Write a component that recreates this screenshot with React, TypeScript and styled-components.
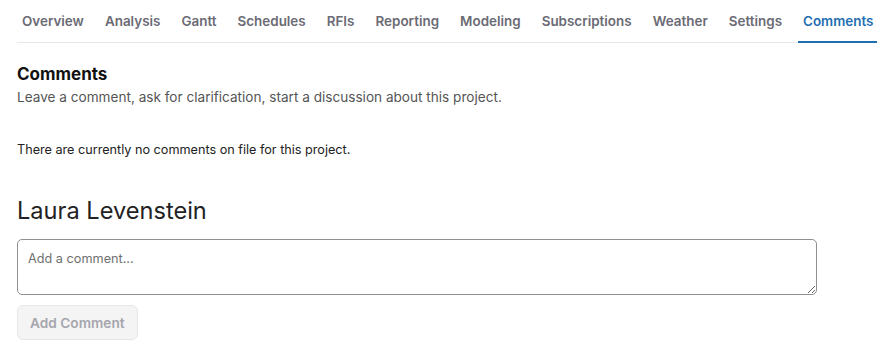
import React, { useState } from 'react';
import styled, { createGlobalStyle } from 'styled-components';

const GlobalStyle = createGlobalStyle`
  body {
    margin: 0;
    background: #ffffff;
    font-family: Inter, "Noto Sans", Arial, sans-serif;
  }
`;

const Page = styled.div`
  padding: 0 4px 0 17px;
`;

const TabBar = styled.nav`
  display: flex;
  gap: 12px;
  border-bottom: 1px solid #e5e7eb;
  height: 42px;
`;

const Tab = styled.button<{ $active: boolean }>`
  background: none;
  border: none;
  padding: 0 4px 0 5px;
  margin-bottom: -1px;
  font-family: inherit;
  font-size: 13.45px;
  font-weight: 600;
  white-space: nowrap;
  color: ${p => (p.$active ? '#1f6fb2' : '#6b6b75')};
  border-bottom: 2px solid ${p => (p.$active ? '#1f6fb2' : 'transparent')};
  cursor: pointer;
`;

const Section = styled.section`
  padding-top: 20px;
`;

const Title = styled.h2`
  margin: 0;
  font-size: 17px;
  font-weight: 700;
  line-height: 22px;
  color: #111111;
`;

const Subtitle = styled.p`
  margin: 0;
  font-size: 13.6px;
  line-height: 24px;
  color: #555555;
`;

const Empty = styled.p`
  margin: 32px 0 0;
  font-size: 12.65px;
  line-height: 18px;
  color: #222222;
`;

const Author = styled.h3`
  margin: 36px 0 0;
  font-size: 23.6px;
  font-weight: 400;
  line-height: 32px;
  color: #222222;
`;

const CommentBox = styled.textarea`
  display: block;
  box-sizing: border-box;
  margin-top: 12px;
  width: 800px;
  height: 56px;
  padding: 11px 10px 8px;
  border: 1px solid #8f8f8f;
  border-radius: 5px;
  font-family: inherit;
  font-size: 12.7px;
  color: #222222;
  &::placeholder {
    color: #707070;
  }
`;

const SubmitButton = styled.button`
  margin-top: 10px;
  height: 35px;
  padding: 0 12px;
  border: 1px solid #e6e6e6;
  border-radius: 6px;
  background: #f4f4f4;
  font-family: inherit;
  font-size: 13.7px;
  font-weight: 600;
  color: #a6a6ad;
`;

const tabs = [
  'Overview',
  'Analysis',
  'Gantt',
  'Schedules',
  'RFIs',
  'Reporting',
  'Modeling',
  'Subscriptions',
  'Weather',
  'Settings',
  'Comments',
];

export default function App() {
  const [active, setActive] = useState('Comments');
  const [text, setText] = useState('');

  return (
    <>
      <GlobalStyle />
      <Page>
        <TabBar>
          {tabs.map(t => (
            <Tab key={t} $active={t === active} onClick={() => setActive(t)}>
              {t}
            </Tab>
          ))}
        </TabBar>
        <Section>
          <Title>Comments</Title>
          <Subtitle>Leave a comment, ask for clarification, start a discussion about this project.</Subtitle>
          <Empty>There are currently no comments on file for this project.</Empty>
          <Author>Laura Levenstein</Author>
          <CommentBox
            placeholder="Add a comment..."
            value={text}
            onChange={e => setText(e.target.value)}
          />
          <SubmitButton disabled={!text.trim()}>Add Comment</SubmitButton>
        </Section>
      </Page>
    </>
  );
}
